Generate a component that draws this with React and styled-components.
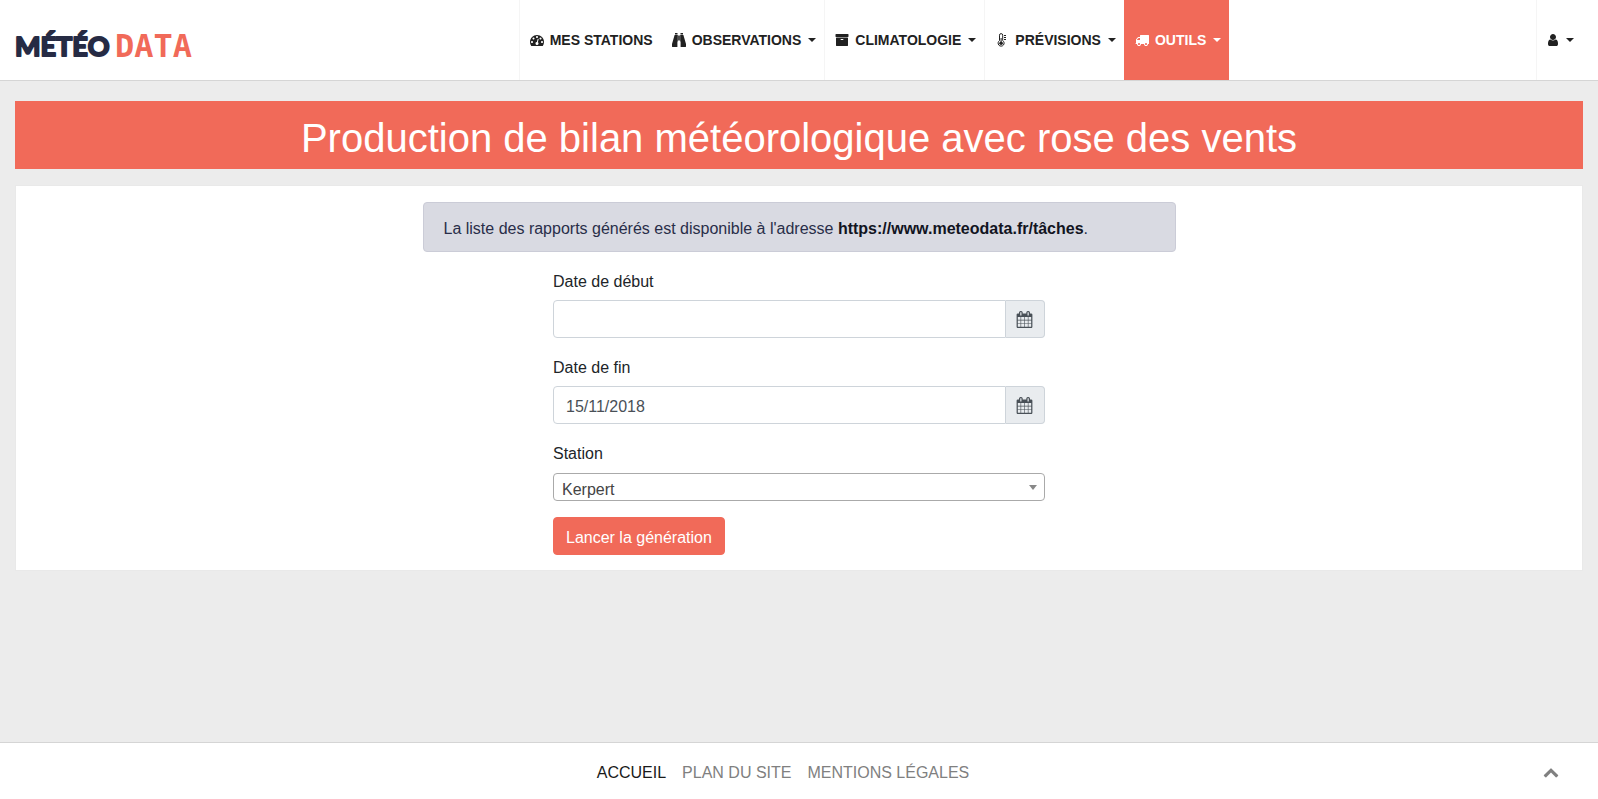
import React from "react";
import styled, { createGlobalStyle, css } from "styled-components";

const coral = "#f16a59";
const navy = "#262b44";

const GlobalStyle = createGlobalStyle`
  *, *::before, *::after { box-sizing: border-box; }
  body {
    margin: 0;
    background: #ececec;
    color: #212529;
    font-family: "Liberation Sans", Arial, sans-serif;
    font-size: 16px;
    line-height: 24px;
  }
`;

const Page = styled.div`
  display: flex;
  flex-direction: column;
  min-height: 100vh;
`;

const Header = styled.header`
  display: flex;
  align-items: stretch;
  padding: 0 16px 0 15px;
  background: #fff;
  border-bottom: 1px solid #d5d5d5;
`;

const Brand = styled.a`
  display: flex;
  align-items: center;
  margin-right: 16px;
  text-decoration: none;
`;

const Logo = styled.svg`
  display: block;
  width: 181px;
  height: 52px;
  overflow: visible;
`;

const Nav = styled.nav`
  flex: 1;
  display: flex;
  justify-content: center;
`;

const NavLink = styled.a`
  display: flex;
  align-items: center;
  height: 80px;
  padding: 0 8px 0 10px;
  border-left: 1px solid ${p => (p.$divider ? "#f5f5f5" : "transparent")};
  color: #212121;
  font-size: 14px;
  font-weight: bold;
  text-transform: uppercase;
  text-decoration: none;
  white-space: nowrap;
  ${p => p.$active && css`
    background: ${coral};
    border-left-color: ${coral};
    color: #fff;
  `}
`;

const Icon = styled.svg`
  flex: none;
  width: ${p => p.$width || 14}px;
  height: 14px;
  margin-right: ${p => p.$gap || 0}px;
  fill: currentColor;
`;

const Caret = styled.span`
  margin-left: 7px;
  border-top: 4px solid;
  border-left: 4px solid transparent;
  border-right: 4px solid transparent;
`;

const Main = styled.main`
  flex: 1;
  padding: 20px 15px;
`;

const Title = styled.h1`
  margin: 0 0 16px;
  padding: 13px 10px 7px;
  background: ${coral};
  color: #fff;
  font-size: 40px;
  font-weight: normal;
  line-height: 48px;
  text-align: center;
`;

const Panel = styled.section`
  display: flex;
  justify-content: center;
  padding: 16px 0 15px;
  background: #fff;
  border: 1px solid #e9e9e9;
`;

const Column = styled.div`
  width: 50%;
  padding: 0 15px;
`;

const Row = styled.div`
  display: flex;
  justify-content: center;
  margin: 0 -15px;
`;

const Notice = styled.div`
  margin-bottom: 16px;
  padding: 14px 20px 10px;
  background: #d9dae2;
  border: 1px solid #cbccd7;
  border-radius: 4px;
  color: #292e49;
`;

const NoticeLink = styled.a`
  color: #12141f;
  font-weight: bold;
  text-decoration: none;
`;

const Form = styled.form`
  width: 66.6667%;
  padding: 0 15px;
`;

const Field = styled.div`
  margin-bottom: 16px;
`;

const Label = styled.label`
  display: block;
  padding-top: 2px;
  margin-bottom: 6px;
`;

const InputGroup = styled.div`
  display: flex;
  height: 38px;
`;

const Input = styled.input`
  flex: 1;
  min-width: 0;
  padding: 9px 12px 5px;
  border: 1px solid #ced4da;
  border-radius: 4px 0 0 4px;
  background: #fff;
  color: #495057;
  font: inherit;
`;

const PickerButton = styled.button`
  display: flex;
  align-items: center;
  padding: 0 11px 0 10px;
  background: #e9ecef;
  border: 1px solid #ced4da;
  border-left: 0;
  border-radius: 0 4px 4px 0;
  color: #495057;
`;

const CalendarIcon = styled(Icon)`
  width: 17px;
  height: 17px;
`;

const SelectWrap = styled.div`
  position: relative;
  padding-top: 1px;
`;

const Select = styled.select`
  display: block;
  width: 100%;
  height: 28px;
  padding: 4px 20px 0 8px;
  appearance: none;
  background: #fff;
  border: 1px solid #aaa;
  border-radius: 4px;
  color: #444;
  font: inherit;
`;

const SelectArrow = styled.span`
  position: absolute;
  top: 13px;
  right: 8px;
  border-top: 5px solid #888;
  border-left: 4px solid transparent;
  border-right: 4px solid transparent;
  pointer-events: none;
`;

const SubmitButton = styled.button`
  display: block;
  padding: 9px 12px 5px;
  height: 38px;
  background: ${coral};
  border: 1px solid ${coral};
  border-radius: 4px;
  color: #fff;
  font: inherit;
  line-height: 22px;
`;

const Footer = styled.footer`
  display: flex;
  align-items: center;
  padding: 8px 31px;
  background: #fff;
  border-top: 1px solid #d5d5d5;
`;

const FooterNav = styled.nav`
  flex: 1;
  display: flex;
  justify-content: center;
`;

const FooterLink = styled.a`
  padding: 10px 8px 6px;
  color: ${p => (p.$current ? "#1a1a1a" : "#808080")};
  text-decoration: none;
  text-transform: uppercase;
`;

const TopLink = styled.a`
  display: flex;
  padding: 10px 8px 8px;
  color: #808080;
`;

const TopIcon = styled(Icon)`
  width: 16px;
  height: 16px;
`;

const paths = {
  dashboard:
    "M384 1152q0-53-37.5-90.5t-90.5-37.5-90.5 37.5-37.5 90.5 37.5 90.5 90.5 37.5 90.5-37.5 37.5-90.5zm192-448q0-53-37.5-90.5t-90.5-37.5-90.5 37.5-37.5 90.5 37.5 90.5 90.5 37.5 90.5-37.5 37.5-90.5zm428 481l101-382q6-26-7.5-48.5t-38.5-29.5-48 6.5-30 39.5l-101 382q-60 5-107 43.5t-63 98.5q-20 77 20 146t117 89 146-20 89-117q16-60-6-117t-72-91zm660-33q0-53-37.5-90.5t-90.5-37.5-90.5 37.5-37.5 90.5 37.5 90.5 90.5 37.5 90.5-37.5 37.5-90.5zm-640-640q0-53-37.5-90.5t-90.5-37.5-90.5 37.5-37.5 90.5 37.5 90.5 90.5 37.5 90.5-37.5 37.5-90.5zm448 192q0-53-37.5-90.5t-90.5-37.5-90.5 37.5-37.5 90.5 37.5 90.5 90.5 37.5 90.5-37.5 37.5-90.5zm320 448q0 261-141 483-19 29-54 29h-1402q-35 0-54-29-141-221-141-483 0-182 71-348t191-286 286-191 348-71 348 71 286 191 191 286 71 348z",
  archive:
    "M1088 832q0-26-19-45t-45-19h-256q-26 0-45 19t-19 45 19 45 45 19h256q26 0 45-19t19-45zm576-192v960q0 26-19 45t-45 19h-1408q-26 0-45-19t-19-45v-960q0-26 19-45t45-19h1408q26 0 45 19t19 45zm64-448v256q0 26-19 45t-45 19h-1536q-26 0-45-19t-19-45v-256q0-26 19-45t45-19h1536q26 0 45 19t19 45z",
  truck:
    "M640 1408q0-52-38-90t-90-38-90 38-38 90 38 90 90 38 90-38 38-90zm-384-512h384v-256h-158q-13 0-22 9l-195 195q-9 9-9 22v30zm1280 512q0-52-38-90t-90-38-90 38-38 90 38 90 90 38 90-38 38-90zm256-1088v1024q0 15-4 26.5t-13.5 18.5-16.5 11.5-23.5 6-22.5 2-25.5 0-22.5-.5q0 106-75 181t-181 75-181-75-75-181h-384q0 106-75 181t-181 75-181-75-75-181h-64q-3 0-22.5.5t-25.5 0-22.5-2-23.5-6-16.5-11.5-13.5-18.5-4-26.5q0-26 19-45t45-19v-320q0-8-.5-35t0-38 2.5-34.5 6.5-37 14-30.5 22.5-30l198-198q19-19 50.5-32t58.5-13h160v-192q0-26 19-45t45-19h1024q26 0 45 19t19 45z",
  user:
    "M1536 1399q0 109-62.5 187t-150.5 78h-854q-88 0-150.5-78t-62.5-187q0-85 8.5-160.5t31.5-152 58.5-131 94-89 134.5-34.5q131 128 313 128t313-128q76 0 134.5 34.5t94 89 58.5 131 31.5 152 8.5 160.5zm-256-887q0 159-112.5 271.5t-271.5 112.5-271.5-112.5-112.5-271.5 112.5-271.5 271.5-112.5 271.5 112.5 112.5 271.5z",
  calendar:
    "M192 1664h288v-288h-288v288zm352 0h320v-288h-320v288zm-352-352h288v-320h-288v320zm352 0h320v-320h-320v320zm-352-384h288v-288h-288v288zm736 736h320v-288h-320v288zm-384-736h320v-288h-320v288zm768 736h288v-288h-288v288zm-384-352h320v-320h-320v320zm-352-864v-288q0-13-9.5-22.5t-22.5-9.5h-64q-13 0-22.5 9.5t-9.5 22.5v288q0 13 9.5 22.5t22.5 9.5h64q13 0 22.5-9.5t9.5-22.5zm736 864h288v-320h-288v320zm-384-384h320v-288h-320v288zm384 0h288v-288h-288v288zm32-480v-288q0-13-9.5-22.5t-22.5-9.5h-64q-13 0-22.5 9.5t-9.5 22.5v288q0 13 9.5 22.5t22.5 9.5h64q13 0 22.5-9.5t9.5-22.5zm384-64v1280q0 52-38 90t-90 38h-1408q-52 0-90-38t-38-90v-1280q0-52 38-90t90-38h128v-96q0-66 47-113t113-47h64q66 0 113 47t47 113v96h384v-96q0-66 47-113t113-47h64q66 0 113 47t47 113v96h128q52 0 90 38t38 90z",
  chevronUp:
    "M1683 1331l-166 165q-19 19-45 19t-45-19l-531-531-531 531q-19 19-45 19t-45-19l-166-165q-19-19-19-45.5t19-45.5l742-741q19-19 45-19t45 19l742 741q19 19 19 45.5t-19 45.5z",
};

function Binoculars() {
  return (
    <Icon viewBox="0 0 14 14" $gap={6} aria-hidden="true">
      <path d="M3 0h2.5v1.5H3zM8.5 0H11v1.5H8.5zM2.6 2h3.2v6.5h-.4V14H.4q-.4 0-.4-.4V11zM11.4 2H8.2v6.5h.4V14h5q.4 0 .4-.4V11zM6.2 2.5h1.6v5H6.2z" />
    </Icon>
  );
}

function Thermometer() {
  return (
    <Icon viewBox="-3 0 14 14" $gap={6} aria-hidden="true">
      <path
        d="M1.5 7.6V2.2a1.6 1.6 0 0 1 3.2 0v5.4a3 3 0 1 1-3.2 0z"
        fill="none"
        stroke="currentColor"
      />
      <circle cx="3.1" cy="10.3" r="1.8" />
      <path d="M2.6 5h1v5h-1zM6 2h2v1h-2zM6 4h2v1h-2zM6 6h2v1h-2z" />
    </Icon>
  );
}

function Calendar() {
  return (
    <CalendarIcon viewBox="0 0 1792 1792" aria-hidden="true">
      <path d={paths.calendar} />
    </CalendarIcon>
  );
}

function DateField({ id, label, value }) {
  return (
    <Field>
      <Label htmlFor={id}>{label}</Label>
      <InputGroup>
        <Input id={id} type="text" defaultValue={value} />
        <PickerButton type="button" aria-label={label}>
          <Calendar />
        </PickerButton>
      </InputGroup>
    </Field>
  );
}

function App() {
  return (
    <Page>
      <GlobalStyle />
      <Header>
        <Brand href="#">
          <Logo viewBox="0 0 181 52">
            <text
              x="0"
              y="42"
              fontFamily="Lato, sans-serif"
              fontSize="27"
              fontWeight="bold"
              style={{ fontKerning: "none" }}
              fill={navy}
              stroke={navy}
              strokeWidth="2"
              strokeLinejoin="round"
            >
              MÉTÉO
            </text>
            <text
              x="100"
              y="43"
              fontFamily="DejaVu Sans Mono, monospace"
              fontSize="32"
              fontWeight="bold"
              fill={coral}
            >
              DATA
            </text>
          </Logo>
        </Brand>
        <Nav>
          <NavLink href="#" $divider>
            <Icon viewBox="0 0 1792 1792" $gap={6} aria-hidden="true">
              <path d={paths.dashboard} />
            </Icon>
            Mes stations
          </NavLink>
          <NavLink href="#">
            <Binoculars />
            Observations
            <Caret />
          </NavLink>
          <NavLink href="#" $divider>
            <Icon viewBox="0 0 1792 1792" $gap={6} aria-hidden="true">
              <path d={paths.archive} />
            </Icon>
            Climatologie
            <Caret />
          </NavLink>
          <NavLink href="#" $divider>
            <Thermometer />
            Prévisions
            <Caret />
          </NavLink>
          <NavLink href="#" $active>
            <Icon viewBox="0 0 1792 1792" $gap={6} aria-hidden="true">
              <path d={paths.truck} />
            </Icon>
            Outils
            <Caret />
          </NavLink>
        </Nav>
        <NavLink href="#" $divider aria-label="Compte">
          <Icon viewBox="128 0 1536 1792" $width={12} aria-hidden="true">
            <path d={paths.user} />
          </Icon>
          <Caret />
        </NavLink>
      </Header>

      <Main>
        <Title>Production de bilan météorologique avec rose des vents</Title>
        <Panel>
          <Column>
            <Notice>
              La liste des rapports générés est disponible à l'adresse{" "}
              <NoticeLink href="#">https://www.meteodata.fr/tâches</NoticeLink>.
            </Notice>
            <Row>
              <Form>
                <DateField id="start" label="Date de début" value="" />
                <DateField id="end" label="Date de fin" value="15/11/2018" />
                <Field>
                  <Label htmlFor="station">Station</Label>
                  <SelectWrap>
                    <Select id="station">
                      <option>Kerpert</option>
                    </Select>
                    <SelectArrow />
                  </SelectWrap>
                </Field>
                <SubmitButton type="button">Lancer la génération</SubmitButton>
              </Form>
            </Row>
          </Column>
        </Panel>
      </Main>

      <Footer>
        <FooterNav>
          <FooterLink href="#" $current>Accueil</FooterLink>
          <FooterLink href="#">Plan du site</FooterLink>
          <FooterLink href="#">Mentions légales</FooterLink>
        </FooterNav>
        <TopLink href="#" aria-label="Haut de page">
          <TopIcon viewBox="0 0 1792 1792" aria-hidden="true">
            <path d={paths.chevronUp} />
          </TopIcon>
        </TopLink>
      </Footer>
    </Page>
  );
}

export default App;
